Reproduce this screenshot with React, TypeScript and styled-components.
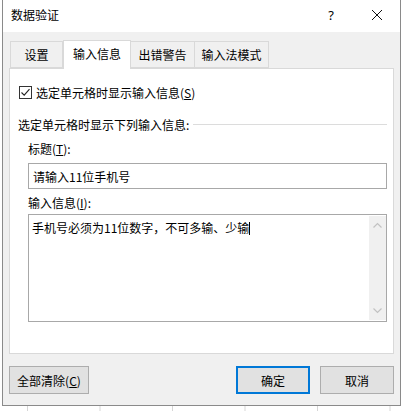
import React from "react";
import styled, { createGlobalStyle } from "styled-components";

const Global = createGlobalStyle`
  html, body { margin: 0; padding: 0; }
  body {
    font-family: "Noto Sans CJK SC", "Microsoft YaHei UI", sans-serif;
    font-size: 12px;
    color: #000;
  }
`;

const Page = styled.div`
  width: 402px;
  height: 411px;
  overflow: hidden;
  background-color: #fff;
  background-image: linear-gradient(to right, #d6d6d6 1px, transparent 1px);
  background-size: 72.5px 100%;
  background-position: 27px 0;
`;

const Dialog = styled.div`
  box-sizing: border-box;
  margin-left: 2px;
  width: 399px;
  height: 406px;
  border: 1px solid #8a8a8a;
  border-top: none;
  display: flex;
  flex-direction: column;
  background: #f0f0f0;
`;

const TitleBar = styled.div`
  height: 32px;
  background: #fff;
  display: flex;
  align-items: center;
  padding-left: 8px;
  flex: none;
`;

const Title = styled.div`
  flex: 1;
  font-size: 12px;
  line-height: 16px;
  margin-top: -2px;
`;

const TitleButton = styled.div`
  width: 46px;
  height: 32px;
  display: flex;
  align-items: center;
  justify-content: center;
  font-family: "Noto Sans", sans-serif;
  font-size: 13px;
  margin-top: -2px;
`;

const Body = styled.div`
  flex: 1;
  display: flex;
  flex-direction: column;
  padding: 8px 6px 0 6px;
`;

const TabRow = styled.div`
  display: flex;
  align-items: flex-end;
  height: 28px;
  padding-left: 1px;
`;

const Tab = styled.div<{ $w: number; $active?: boolean }>`
  box-sizing: border-box;
  width: ${(p) => p.$w}px;
  height: ${(p) => (p.$active ? 29 : 27)}px;
  margin-bottom: ${(p) => (p.$active ? -1 : 0)}px;
  border: 1px solid #d9d9d9;
  border-bottom: ${(p) => (p.$active ? "none" : "1px solid #d9d9d9")};
  border-left: ${(p) => (p.$active ? "1px solid #d9d9d9" : "none")};
  &:first-child { border-left: 1px solid #d9d9d9; }
  background: ${(p) => (p.$active ? "#fff" : "#f0f0f0")};
  position: relative;
  z-index: ${(p) => (p.$active ? 1 : 0)};
  display: flex;
  align-items: center;
  justify-content: center;
  padding-bottom: ${(p) => (p.$active ? 3 : 0)}px;
  font-size: 12px;
`;

const Panel = styled.div`
  box-sizing: border-box;
  height: 286px;
  background: #fff;
  border: 1px solid #d9d9d9;
  padding: 15px 6px 0 8px;
  display: flex;
  flex-direction: column;
`;

const CheckRow = styled.label`
  display: flex;
  align-items: center;
  gap: 4px;
  height: 16px;
  margin-left: 1px;
`;

const Box = styled.span`
  box-sizing: border-box;
  width: 13px;
  height: 13px;
  border: 1px solid #333;
  background: #fff;
  display: flex;
  align-items: center;
  justify-content: center;
`;

const U = styled.span`
  text-decoration: underline;
  text-underline-offset: 1px;
`;

const GroupHead = styled.div`
  display: flex;
  align-items: center;
  gap: 4px;
  margin-top: 16px;
  height: 16px;
  &::after {
    content: "";
    flex: 1;
    height: 1px;
    background: #dcdcdc;
    margin-top: 1px;
  }
`;

const Field = styled.div`
  margin-left: 10px;
  margin-right: 0px;
  display: flex;
  flex-direction: column;
`;

const FieldLabel = styled.div<{ $top: number }>`
  margin-top: ${(p) => p.$top}px;
  height: 16px;
  line-height: 16px;
  margin-bottom: 6px;
`;

const TextBox = styled.div`
  box-sizing: border-box;
  height: 26px;
  border: 1px solid #a8a8a8;
  padding: 0 4px;
  display: flex;
  align-items: center;
  font-size: 12px;
`;

const TextArea = styled.div`
  box-sizing: border-box;
  height: 108px;
  border: 1px solid #a8a8a8;
  display: flex;
  margin-top: -3px;
`;

const AreaText = styled.div`
  flex: 1;
  padding: 5px 3px;
  line-height: 16px;
  display: flex;
  align-items: flex-start;
`;

const Caret = styled.span`
  display: inline-block;
  width: 1px;
  height: 13px;
  background: #000;
  margin-top: 2px;
`;

const ScrollBar = styled.div`
  width: 17px;
  margin: 1px 0;
  background: #f0f0f0;
  display: flex;
  flex-direction: column;
  justify-content: space-between;
  align-items: center;
  padding: 6px 0 6px;
`;

const Footer = styled.div`
  display: flex;
  align-items: center;
  padding-top: 12px;
`;

const Button = styled.div<{ $w: number; $default?: boolean }>`
  box-sizing: border-box;
  width: ${(p) => p.$w}px;
  height: 28px;
  background: #e1e1e1;
  border: ${(p) => (p.$default ? "2px solid #0078d7" : "1px solid #adadad")};
  display: flex;
  align-items: center;
  justify-content: center;
  font-size: 12px;
`;

const Spacer = styled.div`
  flex: 1;
`;

const Gap = styled.div<{ $w: number }>`
  width: ${(p) => p.$w}px;
`;

const Chevron = ({ up }: { up?: boolean }) => (
  <svg width="9" height="6" viewBox="0 0 9 6">
    <path
      d={up ? "M0.5 5.5 L4.5 1.5 L8.5 5.5" : "M0.5 0.5 L4.5 4.5 L8.5 0.5"}
      fill="none"
      stroke="#c2c2c2"
      strokeWidth="1.2"
    />
  </svg>
);

export default function App() {
  return (
    <>
      <Global />
      <Page>
        <Dialog>
          <TitleBar>
            <Title>数据验证</Title>
            <TitleButton>?</TitleButton>
            <TitleButton>
              <svg width="12" height="12" viewBox="0 0 12 12">
                <path d="M1 1 L11 11 M11 1 L1 11" stroke="#111" strokeWidth="1" />
              </svg>
            </TitleButton>
          </TitleBar>
          <Body>
            <TabRow>
              <Tab $w={53}>设置</Tab>
              <Tab $w={68} $active>
                输入信息
              </Tab>
              <Tab $w={64}>出错警告</Tab>
              <Tab $w={74}>输入法模式</Tab>
            </TabRow>
            <Panel>
              <CheckRow>
                <Box>
                  <svg width="11" height="11" viewBox="0 0 11 11">
                    <path d="M1.5 5.5 L4.2 8.2 L9.5 2.2" fill="none" stroke="#222" strokeWidth="1.1" />
                  </svg>
                </Box>
                <span>
                  选定单元格时显示输入信息(<U>S</U>)
                </span>
              </CheckRow>
              <GroupHead>选定单元格时显示下列输入信息:</GroupHead>
              <Field>
                <FieldLabel $top={9}>
                  标题(<U>T</U>):
                </FieldLabel>
                <TextBox>请输入11位手机号</TextBox>
                <FieldLabel $top={6}>
                  输入信息(<U>I</U>):
                </FieldLabel>
                <TextArea>
                  <AreaText>
                    手机号必须为11位数字，不可多输、少输
                    <Caret />
                  </AreaText>
                  <ScrollBar>
                    <Chevron up />
                    <Chevron />
                  </ScrollBar>
                </TextArea>
              </Field>
            </Panel>
            <Footer>
              <Button $w={80}>
                全部清除(<U>C</U>)
              </Button>
              <Spacer />
              <Button $w={74} $default>
                确定
              </Button>
              <Gap $w={10} />
              <Button $w={74}>取消</Button>
            </Footer>
          </Body>
        </Dialog>
      </Page>
    </>
  );
}
